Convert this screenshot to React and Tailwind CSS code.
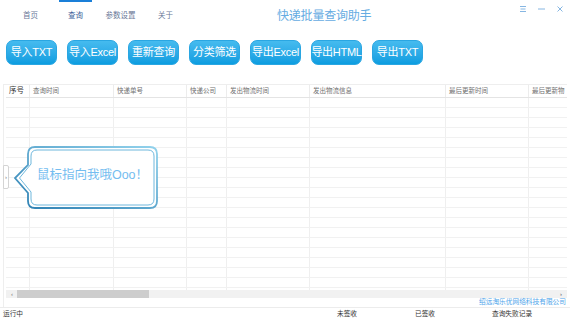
import React from "react";

const font = { fontFamily: '"Liberation Sans","Noto Sans CJK SC",sans-serif' };

const tabs = ["首页", "查询", "参数设置", "关于"];
const buttons = ["导入TXT", "导入Excel", "重新查询", "分类筛选", "导出Excel", "导出HTML", "导出TXT"];
const columns = [
  { name: "序号", w: "w-[24px]" },
  { name: "查询时间", w: "w-[84px]" },
  { name: "快递单号", w: "w-[73px]" },
  { name: "快递公司", w: "w-[40px]" },
  { name: "发出物流时间", w: "w-[83px]" },
  { name: "发出物流信息", w: "w-[136px]" },
  { name: "最后更新时间", w: "w-[83px]" },
  { name: "最后更新物", w: "w-[39px]" },
];

const rows = Array.from({ length: 20 });

const App = () => {
  return (
    <div className="relative w-[570px] h-[320px] bg-white overflow-hidden" style={font}>
      {/* Top bar */}
      <div className="flex h-[32px] items-center relative">
        <div className="flex pl-[8px]">
          {tabs.map((t, i) => (
            <div key={t} className="relative w-[45px] h-[32px] flex items-center justify-center">
              {i === 1 && <div className="absolute top-0 left-[6px] w-[33px] h-[2px] bg-[#1a7fd8]" />}
              <span className={`text-[7.5px] ${i === 1 ? "text-[#3d5f9a]" : "text-[#6a7898]"}`}>{t}</span>
            </div>
          ))}
        </div>
        <div className="ml-[89px] text-[12px] text-[#66ace2] tracking-[-0.2px]">快递批量查询助手</div>
        <div className="absolute right-[7px] top-[6px] flex items-center gap-[12px]">
          <svg width="6" height="6" viewBox="0 0 6 6">
            <path d="M0 0.5H6M0.5 3H5.5M0 5.5H6" stroke="#86b6e2" strokeWidth="1" />
          </svg>
          <svg width="7" height="6" viewBox="0 0 7 6">
            <path d="M0 3H7" stroke="#86b6e2" strokeWidth="1" />
          </svg>
          <svg width="6" height="6" viewBox="0 0 6 6">
            <path d="M0.5 0.5L5.5 5.5M5.5 0.5L0.5 5.5" stroke="#86b6e2" strokeWidth="1" />
          </svg>
        </div>
      </div>

      {/* Buttons */}
      <div className="flex gap-[10px] pl-[6px] mt-[8px] h-[25px]">
        {buttons.map((b) => (
          <button
            key={b}
            className="w-[51px] h-[25px] rounded-[7px] bg-linear-to-b from-[#45bbef] to-[#0a9de0] border border-[#2aa6e2] text-white text-[11px] leading-none flex items-center justify-center whitespace-nowrap tracking-[-0.3px]"
          >
            {b}
          </button>
        ))}
      </div>

      {/* Table */}
      <div className="mt-[19px] ml-[3px] w-[564px] border-l border-[#eeeeee]">
        <div className="h-[206px] overflow-hidden pl-[2px] border-t border-[#eeeeee]">
          <div className="flex h-[13px] border-b border-[#e4e4e4]">
            {columns.map((c, i) => (
              <div
                key={c.name}
                className={`${c.w} shrink-0 border-r border-[#ececec] pl-[3px] flex items-center whitespace-nowrap overflow-hidden text-[6.5px] ${i === 0 ? "text-[#333] text-[7.5px] pl-[2px]" : "text-[#707070]"}`}
              >
                {c.name}
              </div>
            ))}
          </div>
          {rows.map((_, r) => (
            <div key={r} className="flex h-[10px] border-b border-[#f1f1f1]">
              {columns.map((c) => (
                <div key={c.name} className={`${c.w} shrink-0 border-r border-[#efefef]`} />
              ))}
            </div>
          ))}
        </div>
        {/* Horizontal scrollbar */}
        <div className="flex items-center h-[8px] bg-[#f1f1f1] ml-[2px]">
          <span className="w-[11px] text-[6px] text-[#777] leading-none pl-[5px]">‹</span>
          <div className="w-[132px] h-[8px] bg-[#cdcdcd]" />
          <div className="flex-1" />
          <span className="text-[6px] text-[#555] leading-none pr-[5px]">›</span>
        </div>
        <div className="h-[9px] flex items-center justify-end pr-[1px]">
          <span className="text-[6.7px] text-[#4da4ea] whitespace-nowrap">绍远淘乐优网络科技有限公司</span>
        </div>
      </div>

      {/* Status bar */}
      <div className="flex items-center h-[13px] border-t border-[#ececec] text-[6.7px] text-[#333]">
        <div className="w-[337px] pl-[3px]">运行中</div>
        <div className="w-[78px]">未签收</div>
        <div className="w-[77px]">已签收</div>
        <div>查询失败记录</div>
      </div>

      {/* Side handle */}
      <div className="absolute left-[3px] top-[165px] w-[6px] h-[24px] bg-white border border-[#d4d4d4] rounded-r-[2px] flex items-center justify-center">
        <span className="text-[6px] text-[#777] leading-none">›</span>
      </div>

      {/* Tooltip bubble */}
      <div className="absolute left-[13px] top-[145px] w-[148px] h-[66px]">
        <svg width="148" height="66" viewBox="0 0 148 66" className="absolute inset-0">
          <defs>
            <linearGradient id="bubble" x1="0" y1="1" x2="1" y2="0">
              <stop offset="0" stopColor="#2c7fb2" />
              <stop offset="1" stopColor="#92d2ec" />
            </linearGradient>
          </defs>
          <path
            d="M22 2H137Q144 2 144 9V56Q144 63 137 63H22Q15 63 15 56V48L2 33L15 20V9Q15 2 22 2Z"
            fill="white"
            stroke="url(#bubble)"
            strokeWidth="1.8"
          />
          <path
            d="M24 5H135Q141 5 141 11V54Q141 60 135 60H24Q18 60 18 54V47L6.5 33L18 19V11Q18 5 24 5Z"
            fill="none"
            stroke="#5eafd8"
            strokeWidth="0.9"
          />
        </svg>
        <div className="absolute left-[15px] top-[2px] w-[129px] h-[57px] flex items-center justify-center text-[12.5px] text-[#74bdf0] whitespace-nowrap">
          鼠标指向我哦Ooo！
        </div>
      </div>
    </div>
  );
};

export default App;
